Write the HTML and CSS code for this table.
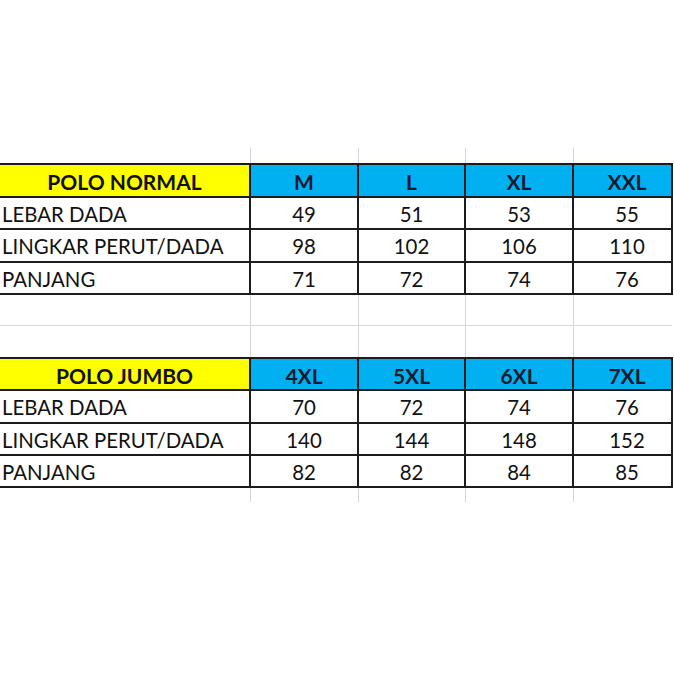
FILE: index.html
```html
<!DOCTYPE html>
<html>
<head>
<meta charset="utf-8">
<link rel="stylesheet" href="styles.css">
</head>
<body>
<div class="page">
<table class="sheet">
  <colgroup>
    <col class="c-label"><col class="c-size"><col class="c-size2"><col class="c-size"><col class="c-last">
  </colgroup>
  <tr class="stub stub-top"><td class="e"></td><td class="g"></td><td class="g"></td><td class="g"></td><td class="g"></td></tr>
  <tr class="r33"><td class="hd-label">POLO NORMAL</td><td class="hd">M</td><td class="hd">L</td><td class="hd">XL</td><td class="hd last">XXL</td></tr>
  <tr class="r32"><td class="lbl">LEBAR DADA</td><td class="num">49</td><td class="num">51</td><td class="num">53</td><td class="num last">55</td></tr>
  <tr class="r33"><td class="lbl">LINGKAR PERUT/DADA</td><td class="num">98</td><td class="num">102</td><td class="num">106</td><td class="num last">110</td></tr>
  <tr class="r32"><td class="lbl">PANJANG</td><td class="num">71</td><td class="num">72</td><td class="num">74</td><td class="num last">76</td></tr>
  <tr class="gap r31"><td class="g first"></td><td class="g"></td><td class="g"></td><td class="g"></td><td class="g"></td></tr>
  <tr class="gap r33"><td class="g first"></td><td class="g"></td><td class="g"></td><td class="g"></td><td class="g"></td></tr>
  <tr class="r32"><td class="hd-label">POLO JUMBO</td><td class="hd">4XL</td><td class="hd">5XL</td><td class="hd">6XL</td><td class="hd last">7XL</td></tr>
  <tr class="r33"><td class="lbl">LEBAR DADA</td><td class="num">70</td><td class="num">72</td><td class="num">74</td><td class="num last">76</td></tr>
  <tr class="r32"><td class="lbl">LINGKAR PERUT/DADA</td><td class="num">140</td><td class="num">144</td><td class="num">148</td><td class="num last">152</td></tr>
  <tr class="r32"><td class="lbl">PANJANG</td><td class="num">82</td><td class="num">82</td><td class="num">84</td><td class="num last">85</td></tr>
  <tr class="stub stub-bottom"><td class="e"></td><td class="g"></td><td class="g"></td><td class="g"></td><td class="g"></td></tr>
</table>
</div>
</body>
</html>
```

FILE: styles.css
```css
html, body {
  margin: 0;
  padding: 0;
  background: #ffffff;
}

.page {
  width: 674px;
  height: 674px;
  overflow: hidden;
  padding-top: 148px;
  box-sizing: border-box;
}

.sheet {
  border-collapse: collapse;
  table-layout: fixed;
  width: 672px;
  font-family: Lato, "Liberation Sans", sans-serif;
  font-size: 20.4px;
  color: #111111;
}

.c-label { width: 250px; }
.c-size { width: 108px; }
.c-size2 { width: 107px; }
.c-last { width: 99px; }

td {
  padding: 0;
  line-height: 1;
  white-space: nowrap;
  overflow: hidden;
}

.stub-top { height: 16px; }
.stub-bottom { height: 15px; }
.r31 { height: 31px; }
.r32 { height: 32px; }
.r33 { height: 33px; }

.e {
  border: none;
}

.g {
  border-left: 1px solid #d6d6d6;
  border-right: 1px solid #d6d6d6;
}

.stub .g {
  border-right: none;
}

.gap td {
  border-bottom: 1px solid #d9d9d9;
}

.gap td.first {
  border-left: none;
}

.gap td:last-child {
  border-right: none;
}

.hd-label,
.hd,
.lbl,
.num {
  border: 2px solid #1c1c1c;
}

.hd-label,
.lbl {
  border-left: none;
}

.hd-label {
  background: #ffff00;
  font-weight: 700;
  font-size: 21px;
  text-align: center;
  padding-top: 2px;
}

.hd {
  background: #00b0f0;
  font-weight: 700;
  font-size: 21px;
  text-align: center;
  color: #141a2e;
  padding-top: 2px;
}

.lbl {
  text-align: left;
  padding-left: 2px;
  padding-top: 2px;
}

.num {
  text-align: center;
  padding-top: 2px;
}

.last {
  padding-left: 9px;
  padding-right: 0;
}
```
